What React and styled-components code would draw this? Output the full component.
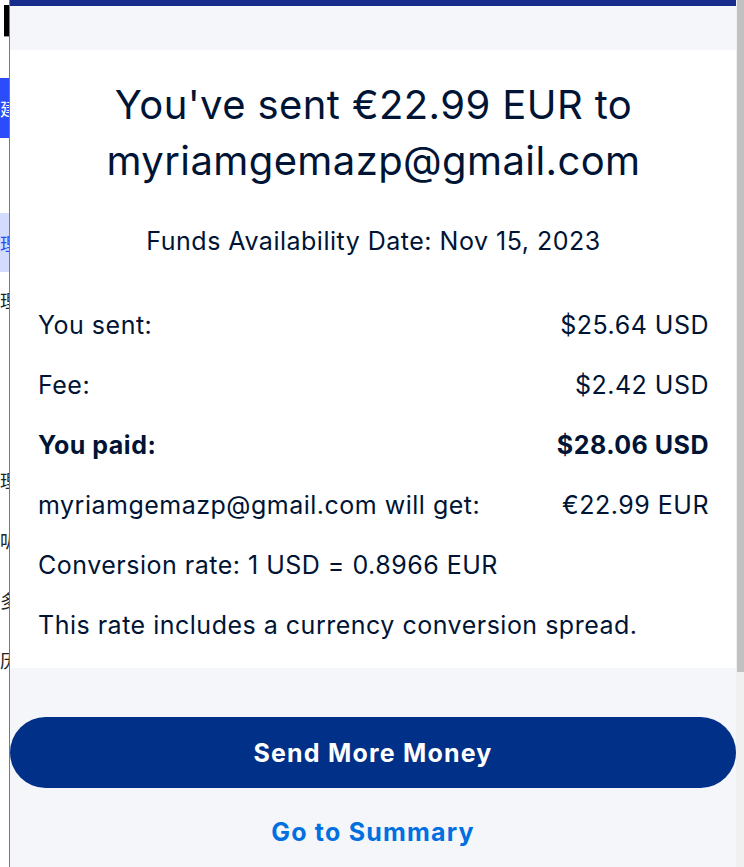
import React from "react";
import styled, { createGlobalStyle } from "styled-components";

const Global = createGlobalStyle`
  html, body { margin: 0; padding: 0; overflow: hidden; background: #fff; }
  body { font-family: Inter, "Noto Sans", "Liberation Sans", sans-serif; }
  * { box-sizing: border-box; }
`;

const Page = styled.div`
  display: grid;
  grid-template-columns: 9px 1px 726px 8px;
  height: 867px;
  width: 744px;
`;

const Behind = styled.div`
  overflow: hidden;
  display: flex;
  flex-direction: column;
  align-items: flex-end;
  font-family: "Noto Sans CJK SC", sans-serif;
  font-size: 18px;
`;

const BlackTab = styled.div`
  margin-top: 5px;
  width: 5px;
  height: 32px;
  background: #000;
  border-bottom: 1px solid #999;
`;

const BehindBlock = styled.div`
  width: 40px;
  height: ${(p) => p.$h}px;
  margin-top: ${(p) => p.$mt}px;
  background: ${(p) => p.$bg};
  color: ${(p) => p.$fg};
  display: flex;
  align-items: center;
  justify-content: flex-end;
  margin-right: -9px;
  line-height: 1;
`;

const BehindChar = styled.div`
  margin-top: ${(p) => p.$mt}px;
  margin-right: -9px;
  height: 24px;
  line-height: 24px;
  color: #222;
`;

const Divider = styled.div`
  background: #7a7a7a;
`;

const Modal = styled.div`
  display: flex;
  flex-direction: column;
  background: #fff;
  color: #001435;
`;

const TopBar = styled.div`
  height: 6px;
  background: #182c8c;
`;

const Header = styled.div`
  height: 44px;
  background: #f5f6fa;
`;

const Content = styled.div`
  background: #fff;
  padding: 27px 27px 27px 28px;
  display: flex;
  flex-direction: column;
`;

const Title = styled.h1`
  margin: 0;
  font-size: 40px;
  line-height: 56px;
  font-weight: 400;
  text-align: center;
  letter-spacing: 0.4px;
`;

const DateLine = styled.p`
  margin: 36px 0 0;
  font-size: 25px;
  line-height: 32px;
  letter-spacing: 0.5px;
  text-align: center;
`;

const Rows = styled.div`
  margin-top: 52px;
  display: flex;
  flex-direction: column;
  gap: 28px;
`;

const Row = styled.div`
  display: flex;
  justify-content: space-between;
  font-size: 25px;
  line-height: 32px;
  letter-spacing: 0.5px;
  font-weight: ${(p) => (p.$bold ? 700 : 400)};
`;

const Footer = styled.div`
  flex: 1;
  background: #f5f6fa;
  display: flex;
  flex-direction: column;
  align-items: stretch;
  padding-top: 49px;
`;

const PrimaryButton = styled.button`
  height: 71px;
  border: 0;
  border-radius: 36px;
  background: #003087;
  color: #fff;
  font-family: inherit;
  font-size: 25px;
  letter-spacing: 1.2px;
  font-weight: 700;
  padding: 0;
  cursor: pointer;
`;

const LinkButton = styled.button`
  margin-top: 28px;
  border: 0;
  background: none;
  color: #0070e0;
  font-family: inherit;
  font-size: 25px;
  letter-spacing: 1.2px;
  font-weight: 700;
  line-height: 32px;
  padding: 0;
  cursor: pointer;
`;

const Scrollbar = styled.div`
  background: #f0f0f0;
  display: flex;
  flex-direction: column;
  align-items: flex-end;
`;

const Thumb = styled.div`
  width: 7px;
  height: 672px;
  background: #c1c1c1;
`;

export default function App() {
  return (
    <>
      <Global />
      <Page>
        <Behind>
          <BlackTab />
          <BehindBlock $mt={41} $h={60} $bg="#2b4cf9" $fg="#fff">建</BehindBlock>
          <BehindBlock $mt={75} $h={59} $bg="#d3dbff" $fg="#2b4cf9">理</BehindBlock>
          <BehindChar $mt={16}>理</BehindChar>
          <BehindChar $mt={156}>理</BehindChar>
          <BehindChar $mt={36}>叭</BehindChar>
          <BehindChar $mt={36}>多</BehindChar>
          <BehindChar $mt={36}>历</BehindChar>
        </Behind>
        <Divider />
        <Modal>
          <TopBar />
          <Header />
          <Content>
            <Title>
              You've sent €22.99 EUR to
              <br />
              myriamgemazp@gmail.com
            </Title>
            <DateLine>Funds Availability Date: Nov 15, 2023</DateLine>
            <Rows>
              <Row>
                <span>You sent:</span>
                <span>$25.64 USD</span>
              </Row>
              <Row>
                <span>Fee:</span>
                <span>$2.42 USD</span>
              </Row>
              <Row $bold>
                <span>You paid:</span>
                <span>$28.06 USD</span>
              </Row>
              <Row>
                <span>myriamgemazp@gmail.com will get:</span>
                <span>€22.99 EUR</span>
              </Row>
              <Row>
                <span>Conversion rate: 1 USD = 0.8966 EUR</span>
              </Row>
              <Row>
                <span>This rate includes a currency conversion spread.</span>
              </Row>
            </Rows>
          </Content>
          <Footer>
            <PrimaryButton>Send More Money</PrimaryButton>
            <LinkButton>Go to Summary</LinkButton>
          </Footer>
        </Modal>
        <Scrollbar>
          <Thumb />
        </Scrollbar>
      </Page>
    </>
  );
}
